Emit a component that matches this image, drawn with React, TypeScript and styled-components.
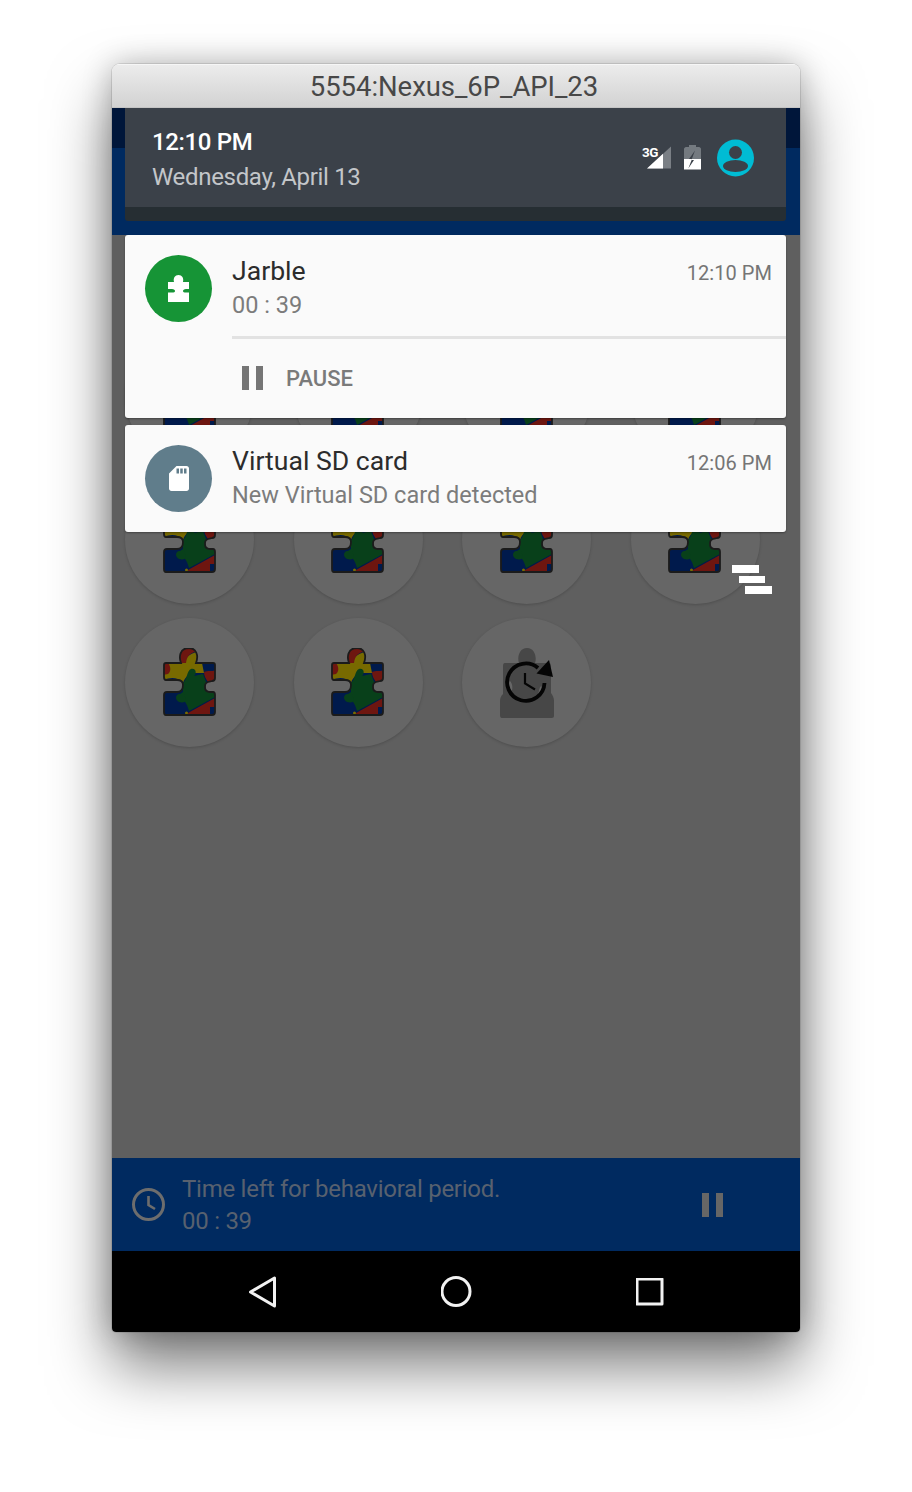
import React, { useId } from "react";
import styled, { createGlobalStyle } from "styled-components";

const Global = createGlobalStyle`
  html, body { margin: 0; padding: 0; background: #fff; }
  body { height: 1492px; overflow: hidden; font-family: Roboto, "Liberation Sans", sans-serif; }
`;
const Page = styled.div`
  padding-top: 64px;
  display: flex;
  justify-content: center;
`;
const Win = styled.div`
  width: 688px;
  height: 1268px;
  display: flex;
  flex-direction: column;
  border-radius: 8px 8px 4px 4px;
  box-shadow: 0 34px 62px rgba(0, 0, 0, 0.52), 0 0 30px rgba(0, 0, 0, 0.24), 0 0 0 1px rgba(0, 0, 0, 0.1);
  overflow: hidden;
`;
const TitleBar = styled.div`
  height: 44px;
  flex: none;
  box-sizing: border-box;
  border-top: 1px solid #f6f6f6;
  border-bottom: 1px solid #c4c4c4;
  background: linear-gradient(#ececec, #d2d2d2);
  display: flex;
  align-items: center;
  justify-content: center;
  padding-right: 4px;
  font-size: 27.5px;
  color: #484848;
  letter-spacing: -0.05px;
`;
const Screen = styled.div`
  position: relative;
  flex: 1;
  display: flex;
  flex-direction: column;
  min-height: 0;
`;
const StatusStrip = styled.div`
  height: 40px;
  flex: none;
  background: #00163a;
`;
const AppBar = styled.div`
  height: 87px;
  flex: none;
  background: #002a60;
`;
const Main = styled.div`
  position: relative;
  flex: 1;
  background: #5f5f5f;
  padding: 97px 0 0 13px;
  box-sizing: border-box;
  min-height: 0;
`;
const Grid = styled.div`
  display: grid;
  grid-template-columns: repeat(4, 129px);
  column-gap: 39.67px;
  row-gap: 14px;
`;
const Tile = styled.div`
  width: 129px;
  height: 129px;
  border-radius: 50%;
  background: #666;
  box-shadow: 0 1px 3px rgba(0, 0, 0, 0.18);
  display: flex;
  align-items: center;
  justify-content: center;
`;
const TileArt = styled.svg`
  width: 54px;
  height: 70px;
  filter: blur(0.45px);
`;
const StackMenu = styled.div`
  position: absolute;
  top: 330px;
  left: 620px;
  display: flex;
  flex-direction: column;
  gap: 3px;
`;
const StackBar = styled.div<{ $shift: number }>`
  width: 26.5px;
  height: 7.5px;
  background: #fff;
  margin-left: ${(p) => p.$shift}px;
`;
const TimerBar = styled.div`
  height: 93px;
  flex: none;
  background: #002a60;
  display: flex;
  align-items: center;
  padding: 0 77px 0 20px;
  box-sizing: border-box;
`;
const TimerText = styled.div`
  flex: 1;
  margin-left: 17px;
  color: #58616f;
  font-size: 24px;
  line-height: 32px;
  letter-spacing: -0.26px;
`;
const NavBar = styled.div`
  height: 81px;
  flex: none;
  background: #000;
  display: flex;
  align-items: center;
  justify-content: center;
`;
const NavSlot = styled.div`
  width: 193.5px;
  display: flex;
  justify-content: center;
`;
const Shade = styled.div`
  position: absolute;
  top: 0;
  left: 13px;
  width: 661px;
  display: flex;
  flex-direction: column;
`;
const ShadeHead = styled.div`
  height: 113px;
  border-radius: 0 0 3px 3px;
  background: #262e33;
  margin-bottom: 14px;
`;
const ShadeTop = styled.div`
  height: 99px;
  background: #3b4149;
  display: flex;
  align-items: center;
  justify-content: space-between;
  padding: 0 31px 0 27px;
  box-sizing: border-box;
`;
const HeadText = styled.div`
  padding-top: 3px;
`;
const Clock = styled.div`
  color: #fff;
  font-size: 24px;
  font-weight: 500;
  line-height: 34px;
  letter-spacing: -0.35px;
`;
const DateLine = styled.div`
  color: #c3c6c9;
  font-size: 24px;
  line-height: 34px;
  margin-top: 1px;
  letter-spacing: -0.32px;
`;
const StatusIcons = styled.div`
  position: relative;
  display: flex;
  align-items: center;
`;
const NetLabel = styled.span`
  position: absolute;
  left: 0;
  top: 7px;
  color: #fff;
  font-size: 13.5px;
  font-weight: 700;
  letter-spacing: -0.6px;
  line-height: 13px;
`;
const Card = styled.div<{ $mb?: number }>`
  background: #fafafa;
  border-radius: 3px;
  box-shadow: 0 1px 2px rgba(0, 0, 0, 0.35);
  display: flex;
  padding-left: 20px;
  margin-bottom: ${(p) => p.$mb ?? 0}px;
`;
const Badge = styled.div<{ $bg: string }>`
  width: 67px;
  height: 67px;
  flex: none;
  margin-top: 20px;
  border-radius: 50%;
  background: ${(p) => p.$bg};
  display: flex;
  align-items: center;
  justify-content: center;
`;
const CardBody = styled.div`
  flex: 1;
  margin-left: 20px;
  min-width: 0;
`;
const CardHead = styled.div<{ $h: number }>`
  padding: 18px 14px 0 0;
  display: flex;
  justify-content: space-between;
  align-items: flex-start;
  height: ${(p) => p.$h}px;
  box-sizing: border-box;
`;
const Title = styled.div`
  font-size: 26.6px;
  line-height: 36px;
  color: #2c2c2c;
`;
const Sub = styled.div`
  font-size: 23.5px;
  line-height: 32px;
  color: #7c7c7c;
`;
const Time = styled.div`
  font-size: 20px;
  line-height: 40px;
  color: #757575;
  letter-spacing: 0.05px;
`;
const Divider = styled.div`
  height: 2.5px;
  background: #e2e2e2;
`;
const ActionRow = styled.div`
  height: 79.5px;
  display: flex;
  align-items: center;
  padding-left: 10px;
  gap: 23px;
  font-size: 22px;
  font-weight: 500;
  color: #7a7a7a;
`;

function Puzzle() {
  const id = useId();
  const outline =
    "M18 15C16 10 16 0 26 0C33 0 36 7 33 15H50C51.500 15 52 16 52 17V30C52 32 51 33 49 33C45 34 42 34 42 38C42 41 42 43 46 44H50C51.500 44 52 45 52 47V64C52 66 51 67 49 67H3C1.500 67 1 66 1 64V47C1 45 2 44 4 44H14C18 44 20 41 20 37C20 33 17 32 14 32H3C1.500 32 1 31 1 29V17C1 16 1.500 15 3 15Z";
  return (
    <TileArt viewBox="0 0 54 70">
      <defs>
        <clipPath id={id}>
          <path d={outline} />
        </clipPath>
      </defs>
      <g clipPath={`url(#${id})`}>
        <rect width="54" height="70" fill="#001a4c" />
        <path d="M0 15H22C22 10 24 7 36 3V15H39L41 25L32 25C29 24 22 28 20 35C14 28 6 30 0 32Z" fill="#786a00" />
        <path d="M16 0H36V3C28 4 24 7 23 15H16Z" fill="#6e1610" />
        <path d="M0 15H5C8 19 8 23 5 26L0 27Z" fill="#6e1610" />
        <path d="M41 24C45 22 48 24 54 22V34H45C43 31 41 28 41 24Z" fill="#6e1610" />
        <path d="M20 35C24 32 24 22 28 21C33 20 34 25 31 28L40 26L43 34L42 43L54 44V48L26 63C24 55 20 50 14 48L20 44Z" fill="#08401a" />
        <path d="M16 46C12 47 12 52 16 54C20 55 23 54 23 52L21 46Z" fill="#08401a" />
        <path d="M25 65L54 49V59H47V70H25Z" fill="#6e1610" />
        <circle cx="23.500" cy="65" r="1.500" fill="#786a00" />
      </g>
      <path d={outline} fill="none" stroke="#1b1b1b" strokeWidth="1.800" />
    </TileArt>
  );
}

function Reset() {
  return (
    <TileArt viewBox="0 0 54 70">
      <path d="M19 15C17 10 19 0 27 0C35 0 37 10 35 15H49C51 15 51 17 51 19V45C53 48 54 50 54 53V68C54 70 52 70 50 70H2C0 70 0 68 0 66V53C0 50 1 48 3 46V19C3 17 3 15 5 15Z" fill="#474747" />
      <path d="M10 33C8 36 8 42 11 44C13 42 13 36 10 33ZM41 38C39 40 39 44 38 46C41 44 43 41 41 38Z" fill="#666" />
      <path d="M44.500 35A18.700 18.700 0 1 1 38 20" fill="none" stroke="#050505" strokeWidth="3.800" />
      <path d="M49 12L53 29L36.500 25.500Z" fill="#050505" />
      <path d="M25 25V35.500L35 41.500" fill="none" stroke="#050505" strokeWidth="2.200" />
    </TileArt>
  );
}

const PauseGlyph = ({ fill }: { fill: string }) => (
  <svg width="21" height="24" viewBox="0 0 21 24">
    <rect x="0" width="7" height="24" fill={fill} />
    <rect x="14" width="7" height="24" fill={fill} />
  </svg>
);

export default function App() {
  const tiles = Array.from({ length: 11 }, (_, i) => i);
  return (
    <Page>
      <Global />
      <Win>
        <TitleBar>5554:Nexus_6P_API_23</TitleBar>
        <Screen>
          <StatusStrip />
          <AppBar />
          <Main>
            <Grid>
              {tiles.map((i) => (
                <Tile key={i}>{i === 10 ? <Reset /> : <Puzzle />}</Tile>
              ))}
            </Grid>
            <StackMenu>
              <StackBar $shift={0} />
              <StackBar $shift={6.5} />
              <StackBar $shift={13} />
            </StackMenu>
          </Main>
          <TimerBar>
            <svg width="33" height="33" viewBox="0 0 33 33" fill="none" stroke="#6d6d6d" strokeWidth="3">
              <circle cx="16.500" cy="16.500" r="15" />
              <path d="M16.500 8V17L23 21" strokeWidth="2.600" />
            </svg>
            <TimerText>
              <div>Time left for behavioral period.</div>
              <div>00 : 39</div>
            </TimerText>
            <PauseGlyph fill="#666" />
          </TimerBar>
          <NavBar>
            <NavSlot>
              <svg width="28" height="32" viewBox="0 0 28 32" fill="none" stroke="#f2f2f2" strokeWidth="3" strokeLinejoin="round">
                <path d="M25.500 2V30L1.500 16Z" />
              </svg>
            </NavSlot>
            <NavSlot>
              <svg width="31" height="31" viewBox="0 0 31 31" fill="none" stroke="#f2f2f2" strokeWidth="3">
                <circle cx="15" cy="15.500" r="14" />
              </svg>
            </NavSlot>
            <NavSlot>
              <svg width="28" height="28" viewBox="0 0 28 28" fill="none" stroke="#f2f2f2" strokeWidth="3" strokeLinejoin="round">
                <rect x="1" y="1" width="25" height="25" />
              </svg>
            </NavSlot>
          </NavBar>
          <Shade>
            <ShadeHead>
              <ShadeTop>
                <HeadText>
                  <Clock>12:10 PM</Clock>
                  <DateLine>Wednesday, April 13</DateLine>
                </HeadText>
                <StatusIcons>
                  <NetLabel>3G</NetLabel>
                  <svg width="113" height="38" viewBox="0 0 113 38">
                    <path d="M5 29.500L29 7.500V29.500Z" fill="#7a7f85" />
                    <path d="M5 29.500L21 14.800V29.500Z" fill="#fff" />
                    <path d="M42 10C42 9 43 8 44 8H47V6H54V8H57C58 8 59 9 59 10V20H42Z" fill="#747a80" />
                    <path d="M42 20H59V30.500H42Z" fill="#fff" />
                    <path d="M53 11.500L47 20H50L46.300 29.500L52 21H49.500L53 11.500Z" fill="#3b4149" />
                    <circle cx="93.500" cy="19" r="18.500" fill="#00bcd4" />
                    <circle cx="93.500" cy="13.500" r="6.500" fill="#3b4149" />
                    <ellipse cx="93.500" cy="27" rx="12.500" ry="6" fill="#3b4149" />
                  </svg>
                </StatusIcons>
              </ShadeTop>
            </ShadeHead>
            <Card $mb={7}>
              <Badge $bg="#169436">
                <svg width="23" height="27" viewBox="0 0 23 27" fill="#fff">
                  <path d="M7 7C6 3 8 0 11.500 0C15 0 17 3 16 7H22V14H19C17 14 16 15 16 16C16 17 17 17.500 19 17.500H22V27H1V17.500H5C7 17.500 8 17 8 16C8 15 7 14 5 14H1V7Z" />
                </svg>
              </Badge>
              <CardBody>
                <CardHead $h={101}>
                  <div>
                    <Title>Jarble</Title>
                    <Sub>00 : 39</Sub>
                  </div>
                  <Time>12:10 PM</Time>
                </CardHead>
                <Divider />
                <ActionRow>
                  <PauseGlyph fill="#757575" />
                  <span>PAUSE</span>
                </ActionRow>
              </CardBody>
            </Card>
            <Card>
              <Badge $bg="#607d8b">
                <svg width="20" height="25" viewBox="4 2 16 20" fill="#fff">
                  <path d="M18 2h-8L4.020 8 4 20c0 1.100.9 2 2 2h12c1.100 0 2-.9 2-2V4c0-1.100-.9-2-2-2zm-6 6h-2V4h2v4zm3 0h-2V4h2v4zm3 0h-2V4h2v4z" />
                </svg>
              </Badge>
              <CardBody>
                <CardHead $h={107}>
                  <div>
                    <Title>Virtual SD card</Title>
                    <Sub>New Virtual SD card detected</Sub>
                  </div>
                  <Time>12:06 PM</Time>
                </CardHead>
              </CardBody>
            </Card>
          </Shade>
        </Screen>
      </Win>
    </Page>
  );
}
